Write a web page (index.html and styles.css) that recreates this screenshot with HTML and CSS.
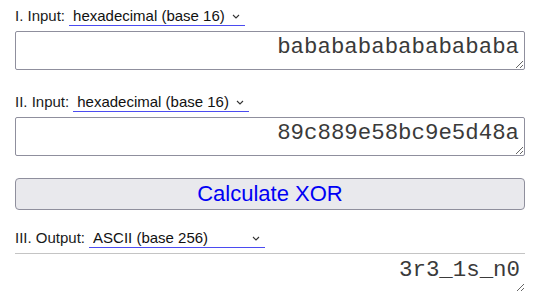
FILE: index.html
```html
<!DOCTYPE html>
<html>
<head>
<meta charset="utf-8">
<link rel="stylesheet" href="styles.css">
</head>
<body>
<main class="page">
  <section class="field">
    <div class="row">
      <label class="label">I. Input:</label>
      <span class="select-wrap">
        <select class="select"><option>hexadecimal (base 16)</option></select>
        <svg class="chev" width="8" height="5" viewBox="0 0 8 5"><path d="M1 1 L4 4 L7 1" fill="none" stroke="#333" stroke-width="1.1"/></svg>
      </span>
    </div>
    <textarea class="box" spellcheck="false">bababababababababa</textarea>
  </section>
  <section class="field">
    <div class="row">
      <label class="label">II. Input:</label>
      <span class="select-wrap">
        <select class="select"><option>hexadecimal (base 16)</option></select>
        <svg class="chev" width="8" height="5" viewBox="0 0 8 5"><path d="M1 1 L4 4 L7 1" fill="none" stroke="#333" stroke-width="1.1"/></svg>
      </span>
    </div>
    <textarea class="box" spellcheck="false">89c889e58bc9e5d48a</textarea>
  </section>
  <button class="calc">Calculate XOR</button>
  <section class="field out">
    <div class="row">
      <label class="label">III. Output:</label>
      <span class="select-wrap">
        <select class="select"><option>ASCII (base 256)</option></select>
        <svg class="chev" width="8" height="5" viewBox="0 0 8 5"><path d="M1 1 L4 4 L7 1" fill="none" stroke="#333" stroke-width="1.1"/></svg>
      </span>
    </div>
    <textarea class="box result" spellcheck="false" readonly>3r3_1s_n0</textarea>
  </section>
</main>
</body>
</html>
```

FILE: styles.css
```css
html, body {
  margin: 0;
  padding: 0;
  background: #fff;
}
.page {
  display: flex;
  flex-direction: column;
  padding: 5px 13px 0 15px;
  font-family: "Liberation Sans", Arial, sans-serif;
  color: #1a1a1a;
}
.field {
  display: flex;
  flex-direction: column;
  gap: 5px;
  margin-bottom: 21px;
}
.row {
  display: flex;
  align-items: center;
  gap: 4px;
  height: 21px;
}
.label {
  font-size: 15px;
  line-height: 21px;
}
.select-wrap {
  position: relative;
  display: inline-block;
}
.select {
  appearance: none;
  -webkit-appearance: none;
  width: 176px;
  height: 21px;
  box-sizing: border-box;
  border: 0;
  border-bottom: 1px solid #4b4bf0;
  border-radius: 0;
  background: #fff;
  font-family: "Liberation Sans", Arial, sans-serif;
  font-size: 15px;
  color: #111;
  padding: 0 16px 0 4px;
  margin: 0;
  outline: none;
}
.chev {
  position: absolute;
  right: 5px;
  top: 9px;
  pointer-events: none;
}
.box {
  display: block;
  width: 510px;
  height: 39px;
  box-sizing: border-box;
  margin: 0;
  border: 1px solid #8f8f9d;
  border-radius: 2px;
  padding: 2px 5px 0 5px;
  font-family: "Liberation Mono", "Courier New", monospace;
  font-size: 22.4px;
  color: #3a3a3a;
  text-align: right;
  resize: vertical;
  overflow: hidden;
  background: #fff;
}
.calc {
  width: 510px;
  height: 32px;
  margin: 1px 0 17px 0;
  box-sizing: border-box;
  border: 1px solid #8f8f9d;
  border-radius: 4px;
  background: #e9e9ed;
  color: #0000f5;
  font-family: "Liberation Sans", Arial, sans-serif;
  font-size: 22px;
  padding: 0;
}
.out {
  margin-bottom: 0;
}
.result {
  border: 0;
  border-top: 1px solid #c4c4c4;
  border-radius: 0;
  padding-top: 3px;
}
```
